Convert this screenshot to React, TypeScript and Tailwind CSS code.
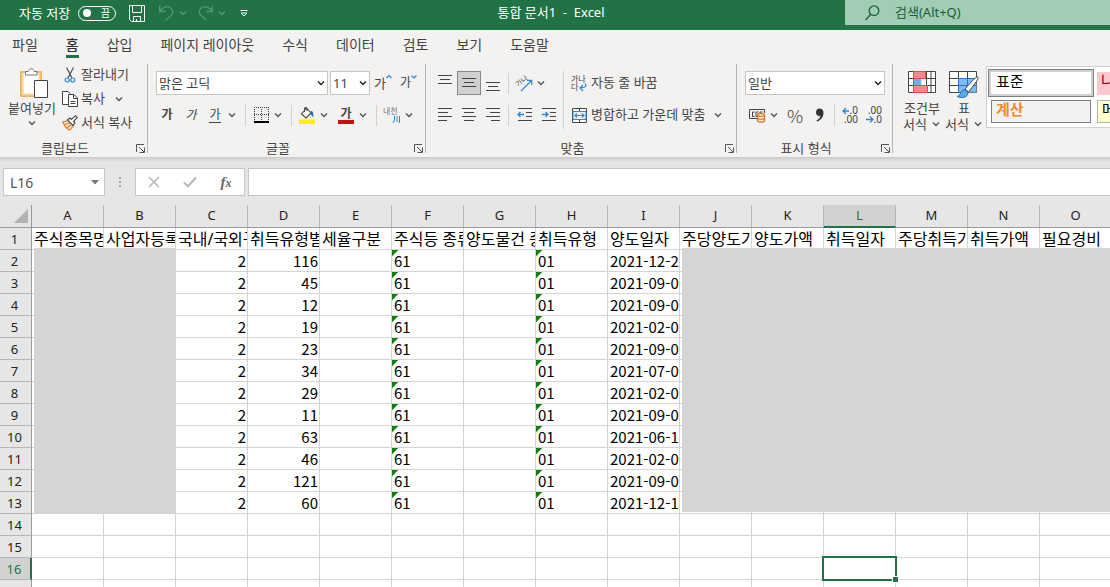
import type { ReactNode } from 'react';

const tabs = ['파일', '홈', '삽입', '페이지 레이아웃', '수식', '데이터', '검토', '보기', '도움말'];

const columns = ['A', 'B', 'C', 'D', 'E', 'F', 'G', 'H', 'I', 'J', 'K', 'L', 'M', 'N', 'O'];

const headings = [
  '주식종목명',
  '사업자등록',
  '국내/국외구',
  '취득유형별',
  '세율구분',
  '주식등 종류',
  '양도물건 종',
  '취득유형',
  '양도일자',
  '주당양도가',
  '양도가액',
  '취득일자',
  '주당취득가',
  '취득가액',
  '필요경비',
];

const records = [
  { quantity: 116, date: '2021-12-20' },
  { quantity: 45, date: '2021-09-06' },
  { quantity: 12, date: '2021-09-06' },
  { quantity: 19, date: '2021-02-02' },
  { quantity: 23, date: '2021-09-06' },
  { quantity: 34, date: '2021-07-08' },
  { quantity: 29, date: '2021-02-02' },
  { quantity: 11, date: '2021-09-06' },
  { quantity: 63, date: '2021-06-14' },
  { quantity: 46, date: '2021-02-02' },
  { quantity: 121, date: '2021-09-06' },
  { quantity: 60, date: '2021-12-17' },
];

const emptyRows = [14, 15, 16, 17];

function Chevron({ className = 'text-[#555]' }: { className?: string }) {
  return (
    <svg width="10" height="10" viewBox="0 0 10 10" fill="none" className={`shrink-0 ${className}`} aria-hidden="true">
      <path d="M2 3.5 L5 6.5 L8 3.5" stroke="currentColor" strokeWidth="1.4" />
    </svg>
  );
}

function Separator({ className = 'ml-2 mr-[3px]' }: { className?: string }) {
  return <div className={`h-[21px] w-px shrink-0 bg-[#d2d0ce] ${className}`} />;
}

function IconButton({ label, active = false, children }: { label: string; active?: boolean; children: ReactNode }) {
  return (
    <button
      type="button"
      aria-label={label}
      className={`flex h-6 w-6 shrink-0 items-center justify-center ${active ? 'border border-[#8a8886] bg-[#d2d0ce]' : ''}`}
    >
      {children}
    </button>
  );
}

function MenuButton({ label }: { label: string }) {
  return (
    <button type="button" aria-label={label} className="flex h-6 w-[10px] shrink-0 items-center">
      <Chevron />
    </button>
  );
}

function Dropdown({ label, value, className }: { label: string; value: string; className: string }) {
  return (
    <div className={`relative h-6 shrink-0 ${className}`}>
      <select
        aria-label={label}
        className="h-6 w-full appearance-none border border-[#c8c6c4] bg-white pl-[2px] text-[13px] leading-5 text-[#444]"
      >
        <option>{value}</option>
      </select>
      <span className="pointer-events-none absolute right-[2px] top-[7px]">
        <Chevron className="text-[#222]" />
      </span>
    </div>
  );
}

function Group({ title, className, launcher = true, children }: { title: string; className: string; launcher?: boolean; children: ReactNode }) {
  return (
    <section aria-label={title} className={`flex h-[97px] shrink-0 ${className}`}>
      <div className="flex min-w-0 flex-1 flex-col">
        <div className="flex-1">{children}</div>
        {launcher && (
          <div className="flex h-[19px] items-center">
            <span className="flex-1 text-center leading-[18px]">{title}</span>
            <button type="button" aria-label={`${title} 설정`} className="flex w-[17px] justify-center pt-[2px] pl-1">
              <svg width="9" height="9" viewBox="0 0 9 9" fill="none" stroke="#555" aria-hidden="true">
                <path d="M0.5 8 V0.5 H8 M3 3 L8 8 M8.5 3.5 V8.5 H3.5" />
              </svg>
            </button>
          </div>
        )}
      </div>
      {launcher && <div className="mt-1 h-[89px] w-px bg-[#b8b6b4]" />}
    </section>
  );
}

function Lines({ rows }: { rows: [number, number, number][] }) {
  return (
    <svg width="14" height="16" viewBox="0 0 14 16" shapeRendering="crispEdges" fill="#444" aria-hidden="true">
      {rows.map(([x, y, width]) => (
        <rect key={y} x={x} y={y} width={width} height="1" />
      ))}
    </svg>
  );
}

function IndentIcon({ arrow }: { arrow: string }) {
  return (
    <svg width="15" height="16" viewBox="0 0 15 16" fill="none" aria-hidden="true">
      <g fill="#444" shapeRendering="crispEdges">
        <rect x="1" y="1" width="14" height="1" />
        <rect x="9" y="5" width="6" height="1" />
        <rect x="9" y="9" width="6" height="1" />
        <rect x="1" y="13" width="14" height="1" />
      </g>
      <path d={arrow} stroke="#2b88d8" strokeWidth="1.3" />
    </svg>
  );
}

function DecimalIcon({ top, bottom, arrow }: { top: string; bottom: string; arrow: string }) {
  return (
    <svg width="17" height="18" viewBox="0 0 17 18" fill="none" className="overflow-visible" aria-hidden="true">
      <text x="16" y="8" fontSize="10" textAnchor="end" fill="#444">{top}</text>
      <text x="16" y="17" fontSize="10" textAnchor="end" fill="#444">{bottom}</text>
      <path d={arrow} stroke="#2b88d8" strokeWidth="1.3" />
    </svg>
  );
}

function TitleBar() {
  return (
    <header className="grid h-[30px] shrink-0 grid-cols-[1fr_auto_1fr] bg-[#217346] text-[13px] text-white">
      <div className="flex h-[26px] items-center pl-[19px]">
        <label htmlFor="autosave" className="w-[59px] leading-6">자동 저장</label>
        <button
          id="autosave"
          type="button"
          role="switch"
          aria-checked="false"
          className="flex h-[15px] w-[38px] items-center justify-between rounded-full border border-white pl-1 pr-[5px] text-[10px] leading-3"
        >
          <span className="h-2 w-2 rounded-full bg-white" />끔
        </button>
        <button type="button" aria-label="저장" className="ml-[13px]">
          <svg width="16" height="17" viewBox="0 0 16 17" fill="none" stroke="white" aria-hidden="true">
            <path d="M0.5 0.5 H15.5 V16.5 H2.5 L0.5 14.5 Z M3.5 0.5 V7.5 H12.5 V0.5 M4.5 16.5 V11.5 H11.5 V16.5 M7.5 14 V16.5" />
          </svg>
        </button>
        <button type="button" aria-label="실행 취소" className="ml-[14px] flex items-center gap-1 text-[#4f9a70]">
          <svg width="15" height="16" viewBox="0 0 15 16" fill="none" stroke="currentColor" strokeWidth="1.3" aria-hidden="true">
            <path d="M0.7 0.5 V6.5 H6.5 M1 6.2 C4 1.5 9 0.5 12 3.2 C14.5 5.5 14 8.5 12 10.5 L6.5 15.5" />
          </svg>
          <Chevron className="text-[#4f9a70]" />
        </button>
        <button type="button" aria-label="다시 실행" className="ml-[10px] flex items-center gap-1 text-[#4f9a70]">
          <svg width="15" height="16" viewBox="0 0 15 16" fill="none" stroke="currentColor" strokeWidth="1.3" aria-hidden="true">
            <path d="M14.3 0.5 V6.5 H8.5 M14 6.2 C11 1.5 6 0.5 3 3.2 C0.5 5.5 1 8.5 3 10.5 L8.5 15.5" />
          </svg>
          <Chevron className="text-[#4f9a70]" />
        </button>
        <button type="button" aria-label="빠른 실행 도구 모음" className="ml-[13px]">
          <svg width="8" height="8" viewBox="0 0 8 8" fill="none" stroke="white" aria-hidden="true">
            <path d="M0.5 1.5 H7.5 M1 4 L4 7 L7 4 Z" />
          </svg>
        </button>
      </div>
      <h1 className="whitespace-pre pr-2 leading-6">통합 문서1  -  Excel</h1>
      <label className="ml-auto flex h-[25px] w-[265px] items-center bg-[#a0cdb4] pl-5">
        <svg width="15" height="16" viewBox="0 0 15 16" fill="none" stroke="#1c5f39" strokeWidth="1.3" aria-hidden="true">
          <circle cx="9" cy="5.7" r="4.8" />
          <path d="M5.7 9.3 L0.6 15" />
        </svg>
        <input
          type="search"
          aria-label="검색"
          placeholder="검색(Alt+Q)"
          className="ml-[15px] min-w-0 flex-1 bg-transparent outline-none placeholder:text-[#1c5f39]"
        />
      </label>
    </header>
  );
}

function ClipboardGroup() {
  return (
    <Group title="클립보드" className="w-[148px]">
      <div className="flex pl-1">
        <button type="button" className="flex w-[56px] flex-col items-center pt-2">
          <svg width="28" height="30" viewBox="0 0 28 30" fill="none" className="ml-1" aria-hidden="true">
            <path d="M1 4 H21 V28 H1 Z" fill="#fff" stroke="#e8a33d" strokeWidth="1.6" />
            <path d="M2.8 5 V26.3 H13 M19.3 5 V12" stroke="#fbdba5" strokeWidth="2" />
            <path d="M5.5 7 V3.5 H8.5 C9 -0.3 13.5 -0.3 14 3.5 H17 V7 Z" fill="#fff" stroke="#777" />
            <path d="M14.5 12.5 H27.5 V29.5 H14.5 Z" fill="#fff" stroke="#444" />
          </svg>
          <span className="leading-5">붙여넣기</span>
          <Chevron />
        </button>
        <div className="ml-[2px] flex flex-col pt-[3px]">
          <button type="button" className="flex h-6 items-center gap-[3px]">
            <svg width="16" height="16" viewBox="0 0 16 16" fill="none" aria-hidden="true">
              <path d="M4.5 0.5 L10 11 M11.5 0.5 L6 11" stroke="#555" strokeWidth="1.3" />
              <circle cx="5.2" cy="13" r="2" stroke="#2b88d8" strokeWidth="1.2" />
              <circle cx="10.8" cy="13" r="2" stroke="#2b88d8" strokeWidth="1.2" />
            </svg>
            잘라내기
          </button>
          <button type="button" className="flex h-6 items-center gap-[3px]">
            <svg width="16" height="16" viewBox="0 0 16 16" fill="#fff" stroke="#444" aria-hidden="true">
              <path d="M0.5 0.5 H6 L9 3.5 V13.5 H0.5 Z" />
              <path d="M6.5 3.5 H12 L15.5 7 V15.5 H6.5 Z M11.5 3.5 V7.5 H15.5 M8.5 10.5 H13.5 M8.5 12.5 H13.5" />
            </svg>
            복사
            <span className="ml-[6px]">
              <Chevron />
            </span>
          </button>
          <button type="button" className="flex h-6 items-center gap-[3px]">
            <svg width="16" height="16" viewBox="0 0 16 16" fill="none" aria-hidden="true">
              <path d="M0.8 7 L6.5 5.5 L11.5 10.5 L8 15 C5.5 14.5 2.5 11 0.8 7 Z" fill="#fce5c5" stroke="#d8741b" strokeWidth="1.1" />
              <path d="M3 9.5 L8 8 M5 12.5 L9.5 10" stroke="#d8741b" strokeWidth="1.1" />
              <path d="M5.5 5 L8 3 L9.5 4.5 L13.5 0.7 L15.3 2.5 L11.5 6.5 L13 8 L11 10.5 Z" fill="#fff" stroke="#444" strokeWidth="1.1" />
            </svg>
            서식 복사
          </button>
        </div>
      </div>
    </Group>
  );
}

function FontGroup() {
  return (
    <Group title="글꼴" className="w-[278px]">
      <div className="flex flex-col gap-2 pl-[7px] pt-[11px]">
        <div className="flex items-center">
          <Dropdown label="글꼴 이름" value="맑은 고딕" className="ml-px w-[172px]" />
          <Dropdown label="글꼴 크기" value="11" className="ml-[2px] w-10" />
          <button type="button" aria-label="글꼴 크게" className="ml-1 flex h-6 items-start text-[13px] leading-6">
            가
            <svg width="6" height="12" viewBox="0 0 6 12" fill="none" stroke="#2b88d8" strokeWidth="1.2" aria-hidden="true">
              <path d="M0.5 7 L3 4.5 L5.5 7" />
            </svg>
          </button>
          <button type="button" aria-label="글꼴 작게" className="ml-2 flex h-6 items-start text-[12px] leading-6">
            가
            <svg width="6" height="12" viewBox="0 0 6 12" fill="none" stroke="#2b88d8" strokeWidth="1.2" aria-hidden="true">
              <path d="M0.5 4.5 L3 7 L5.5 4.5" />
            </svg>
          </button>
        </div>
        <div className="flex items-center">
          <IconButton label="굵게"><span className="text-[12px] font-bold">가</span></IconButton>
          <IconButton label="기울임꼴"><span className="text-[12px] italic">가</span></IconButton>
          <IconButton label="밑줄"><span className="border-b border-[#444] text-[12px] leading-[15px]">가</span></IconButton>
          <MenuButton label="밑줄 옵션" />
          <Separator />
          <IconButton label="테두리">
            <svg width="15" height="16" viewBox="0 0 15 16" fill="none" stroke="#444" aria-hidden="true">
              <path d="M0 0.5 H15 M0 7.5 H15 M0.5 2 V14 M7.5 2 V14 M14.5 2 V14" strokeDasharray="1 1" />
              <path d="M0 15 H15" stroke="#000" strokeWidth="2" />
            </svg>
          </IconButton>
          <MenuButton label="테두리 옵션" />
          <Separator />
          <IconButton label="채우기 색">
            <svg width="16" height="17" viewBox="0 0 16 17" fill="none" aria-hidden="true">
              <path d="M7.5 1 L12 6 L7 11 L2.5 7 Z M5.5 5 V2 C5.5 0 8 0 8 2 V4" fill="#fff" stroke="#444" strokeWidth="1.1" />
              <path d="M12 4 C14 4 14.5 6 14.3 10.5 L11.5 7 Z" fill="#2b6cb0" />
              <rect y="12.5" width="16" height="4.5" fill="#fff100" />
            </svg>
          </IconButton>
          <MenuButton label="채우기 색 옵션" />
          <div className="w-[5px]" />
          <IconButton label="글꼴 색">
            <span className="w-4 border-b-4 border-[#c50f0f] text-center text-[12px] font-bold leading-[13px]">가</span>
          </IconButton>
          <MenuButton label="글꼴 색 옵션" />
          <Separator />
          <IconButton label="윗주 필드">
            <svg width="18" height="18" viewBox="0 0 18 18" fill="none" className="overflow-visible" aria-hidden="true">
              <text x="0" y="8" fontSize="8" fill="#777">내천</text>
              <path d="M11.5 10 V14 L10 17 M14 10 V16 M16.5 10 V17" stroke="#2b88d8" />
            </svg>
          </IconButton>
          <MenuButton label="윗주 옵션" />
        </div>
      </div>
    </Group>
  );
}

function AlignmentGroup() {
  return (
    <Group title="맞춤" className="w-[311px]">
      <div className="flex pl-[7px] pt-[11px]">
        <div className="flex flex-col gap-2">
          <div className="flex items-center">
            <IconButton label="위쪽 맞춤"><Lines rows={[[0, 0, 14], [2, 4, 10], [0, 8, 14]]} /></IconButton>
            <IconButton label="가운데 맞춤" active><Lines rows={[[0, 3, 14], [2, 7, 10], [0, 11, 14]]} /></IconButton>
            <IconButton label="아래쪽 맞춤"><Lines rows={[[0, 7, 14], [2, 11, 10], [0, 15, 14]]} /></IconButton>
            <Separator className="mx-[3px]" />
            <IconButton label="방향">
              <svg width="17" height="17" viewBox="0 0 17 17" fill="none" className="overflow-visible" aria-hidden="true">
                <text x="0" y="10" fontSize="7" fill="#444" transform="rotate(-38 4 8)">가나</text>
                <path d="M5 16 L15.5 5.5 M11 5.3 H15.7 V10" stroke="#2b88d8" strokeWidth="1.2" />
              </svg>
            </IconButton>
            <MenuButton label="방향 옵션" />
          </div>
          <div className="flex items-center">
            <IconButton label="왼쪽 맞춤"><Lines rows={[[0, 1, 14], [0, 5, 10], [0, 9, 14], [0, 13, 9]]} /></IconButton>
            <IconButton label="가로 가운데 맞춤"><Lines rows={[[0, 1, 14], [2, 5, 10], [0, 9, 14], [2, 13, 10]]} /></IconButton>
            <IconButton label="오른쪽 맞춤"><Lines rows={[[0, 1, 14], [4, 5, 10], [0, 9, 14], [5, 13, 9]]} /></IconButton>
            <Separator className="mx-[3px]" />
            <IconButton label="내어쓰기"><IndentIcon arrow="M7 7.5 H1 M3.5 5 L1 7.5 L3.5 10" /></IconButton>
            <IconButton label="들여쓰기"><IndentIcon arrow="M1 7.5 H7 M4.5 5 L7 7.5 L4.5 10" /></IconButton>
          </div>
        </div>
        <div className="mx-[3px] h-[58px] w-px bg-[#d2d0ce]" />
        <div className="flex flex-col gap-2">
          <button type="button" className="flex h-6 items-center">
            <span className="flex w-6 justify-center">
              <svg width="16" height="17" viewBox="0 0 16 17" fill="none" className="overflow-visible" aria-hidden="true">
                <text x="0" y="7" fontSize="8" fill="#444">가나</text>
                <text x="0" y="15" fontSize="8" fill="#444">다</text>
                <path d="M14 8.5 C16 11 14.5 13 9 13 M12 10 L9 13 L12 16" stroke="#2b88d8" strokeWidth="1.2" />
              </svg>
            </span>
            자동 줄 바꿈
          </button>
          <button type="button" className="flex h-6 items-center">
            <span className="flex w-6 justify-center">
              <svg width="15" height="15" viewBox="0 0 15 15" fill="none" aria-hidden="true">
                <path d="M0.5 0.5 H14.5 V14.5 H0.5 Z M0.5 3.5 H14.5 M0.5 11.5 H14.5 M7.5 0.5 V3.5 M7.5 11.5 V14.5" fill="#fff" stroke="#444" />
                <path d="M1 3.5 H14 V11.5 H1 Z" fill="#e5f1fb" stroke="#2b88d8" />
                <path d="M3 7.5 H12 M5 5.5 L3 7.5 L5 9.5 M10 5.5 L12 7.5 L10 9.5" stroke="#2b88d8" strokeWidth="1.2" />
              </svg>
            </span>
            병합하고 가운데 맞춤
            <span className="ml-2">
              <Chevron />
            </span>
          </button>
        </div>
      </div>
    </Group>
  );
}

function NumberGroup() {
  return (
    <Group title="표시 형식" className="w-[156px]">
      <div className="flex flex-col gap-2 pl-2 pt-[11px]">
        <Dropdown label="표시 형식" value="일반" className="w-[140px]" />
        <div className="flex items-center">
          <IconButton label="회계 표시 형식">
            <svg width="17" height="15" viewBox="0 0 17 15" fill="none" aria-hidden="true">
              <path d="M15.5 5 V1.5 H0.5 V10.5 H8" stroke="#444" />
              <path d="M5.5 4 H3.5 V8.5 H5.5 M9 8.5 H7 V4 H9.5 M11 6 V4 H13.5" stroke="#444" />
              <path d="M8.5 7 C8.5 5 15.5 5 15.5 7 V12.5 C15.5 14.5 8.5 14.5 8.5 12.5 Z" fill="#fff" stroke="#d8741b" strokeWidth="1.3" />
              <path d="M8.5 7 C8.5 8.8 15.5 8.8 15.5 7 M8.5 10 C8.5 11.6 15.5 11.6 15.5 10" stroke="#d8741b" strokeWidth="1.3" />
            </svg>
          </IconButton>
          <MenuButton label="회계 옵션" />
          <div className="w-1" />
          <IconButton label="백분율"><span className="font-['Noto_Sans_CJK_KR',sans-serif] text-[18px] font-light leading-6">%</span></IconButton>
          <IconButton label="쉼표 스타일">
            <svg width="9" height="14" viewBox="0 0 9 14" fill="#333" aria-hidden="true">
              <path d="M4.5 0.5 C7 0.5 8.5 2.2 8.5 4.8 C8.5 9 6 12.5 2 13.5 L1.5 12.3 C4 11.3 5.2 9.8 5.4 7.8 C2.8 8.3 1 6.8 1 4.4 C1 2 2.5 0.5 4.5 0.5 Z" />
            </svg>
          </IconButton>
          <Separator className="mx-[3px]" />
          <IconButton label="자릿수 늘림"><DecimalIcon top=".0" bottom=".00" arrow="M7 5 H1 M4 2 L1 5 L4 8" /></IconButton>
          <IconButton label="자릿수 줄임"><DecimalIcon top=".00" bottom=".0" arrow="M0 13.5 H7 M4 10.5 L7 13.5 L4 16.5" /></IconButton>
        </div>
      </div>
    </Group>
  );
}

function StylesGroup() {
  return (
    <Group title="스타일" className="min-w-0 flex-1" launcher={false}>
      <div className="flex pl-2 leading-4">
        <button type="button" className="flex w-[42px] shrink-0 flex-col items-center pt-[11px]">
          <span className="h-[29px]">
            <svg width="28" height="23" viewBox="0 0 28 23" fill="none" aria-hidden="true">
              <path d="M0.5 0.5 H27.5 V21.5 H0.5 Z" fill="#fff" stroke="#444" />
              <path d="M0.5 7.5 H27.5 M0.5 14.5 H27.5 M5.5 0.5 V21.5 M18.5 0.5 V21.5 M23 0.5 V21.5" stroke="#444" />
              <path d="M5.5 0.5 H17.5 V7.5 H5.5 Z M5.5 14.5 H19.5 V21.5 H5.5 Z" fill="#f8888d" stroke="#e8474c" />
              <path d="M5.5 8 H13.5 V14 H5.5 Z" fill="#6cb1ea" />
              <path d="M13.5 8 H18 V14 H13.5 Z" fill="#fff" />
            </svg>
          </span>
          조건부
          <span className="flex items-center gap-1 whitespace-nowrap">서식 <Chevron /></span>
        </button>
        <button type="button" className="flex w-[42px] shrink-0 flex-col items-center pt-[11px]">
          <span className="h-[29px]">
            <svg width="30" height="28" viewBox="0 0 30 28" fill="none" aria-hidden="true">
              <path d="M0.5 0.5 H27.5 V21.5 H0.5 Z" fill="#fff" stroke="#444" />
              <path d="M9.5 7.5 H27.5 V21.5 H9.5 Z" fill="#7dbcf0" />
              <path d="M0.5 7.5 H27.5 M0.5 14.5 H9.5 M9.5 0.5 V21.5 M18.5 0.5 V7.5" stroke="#444" />
              <path d="M9.5 7.5 H27.5 M9.5 7.5 V21.5 M9.5 14.5 H27.5 M18.5 7.5 V21.5" stroke="#1f78c8" />
              <path d="M28.5 6 C30 7 29.5 8.5 19.5 21 L16 18 C25 8 27 5.5 28.5 6 Z" fill="#fff" stroke="#444" />
              <path d="M15.5 18.5 L19 21.5 C19 26.5 13 27.5 8 25.5 C12 24.5 11 19.5 15.5 18.5 Z" fill="#5aa8e8" stroke="#1f6fb5" />
            </svg>
          </span>
          표
          <span className="flex items-center gap-1 whitespace-nowrap">서식 <Chevron /></span>
        </button>
        <div className="ml-px mt-[6px] flex h-[62px] shrink-0 gap-[3px] border border-[#d2d0ce] bg-white pl-px pt-[2px] text-[15px]">
          <div className="flex w-[106px] flex-col items-center gap-[3px]">
            <button type="button" className="h-7 w-full border border-[#7f7f7f] pb-1 pl-[7px] text-left text-black shadow-[inset_0_0_0_2px_#cfcfcf]">
              표준
            </button>
            <button type="button" className="h-[23px] w-[100px] border border-[#7f7f7f] bg-[#f2f2f2] pb-2 pl-1 text-left font-bold text-[#ee8a28]">
              계산
            </button>
          </div>
          <div className="flex w-[100px] flex-col gap-[5px] pt-[3px]">
            <button type="button" className="h-[23px] bg-[#ffc7ce] pb-2 pl-1 text-left text-[#9c0006]">나쁨</button>
            <button type="button" className="h-[23px] border border-[#b2b2b2] bg-[#ffffcc] pb-2 pl-1 text-left text-black">메모</button>
          </div>
        </div>
      </div>
    </Group>
  );
}

function Ribbon() {
  return (
    <div className="shrink-0 overflow-hidden bg-[#f3f2f1] text-[13px] text-[#444]">
      <nav className="flex h-[30px] gap-7 pl-3 text-[14px] leading-[30px]">
        {tabs.map((tab) => (
          <a
            key={tab}
            href="#"
            className={`h-7 whitespace-nowrap ${tab === '홈' ? 'border-b-[3px] border-[#217346] font-medium text-[#333]' : ''}`}
          >
            {tab}
          </a>
        ))}
      </nav>
      <div className="flex">
        <ClipboardGroup />
        <FontGroup />
        <AlignmentGroup />
        <NumberGroup />
        <StylesGroup />
      </div>
    </div>
  );
}

function FormulaBar() {
  return (
    <div className="flex h-12 shrink-0 bg-linear-to-b from-[#cbcac9] to-[#e6e6e6] to-[5px] pl-[3px] pt-[11px]">
      <div className="flex h-7 w-[102px] items-center border border-[#c6c6c6] bg-white">
        <input aria-label="이름 상자" defaultValue="L16" className="w-20 bg-transparent pl-[6px] text-[14px] text-[#555] outline-none" />
        <button type="button" aria-label="이름 목록" className="ml-[7px]">
          <svg width="8" height="5" viewBox="0 0 8 5" fill="#777" aria-hidden="true">
            <path d="M0 0 H8 L4 4.5 Z" />
          </svg>
        </button>
      </div>
      <div className="flex h-7 w-[30px] flex-col items-center justify-center gap-[2px]">
        <span className="h-[2px] w-[2px] bg-[#a6a6a6]" />
        <span className="h-[2px] w-[2px] bg-[#a6a6a6]" />
        <span className="h-[2px] w-[2px] bg-[#a6a6a6]" />
      </div>
      <div className="flex h-7 w-[110px] border border-[#c6c6c6] bg-white">
        <button type="button" aria-label="취소" className="flex w-9 items-center justify-center">
          <svg width="12" height="12" viewBox="0 0 12 12" fill="none" stroke="#b9b9b9" strokeWidth="1.6" aria-hidden="true">
            <path d="M1 1 L11 11 M11 1 L1 11" />
          </svg>
        </button>
        <button type="button" aria-label="입력" className="flex w-9 items-center justify-center">
          <svg width="14" height="12" viewBox="0 0 14 12" fill="none" stroke="#b9b9b9" strokeWidth="2.2" aria-hidden="true">
            <path d="M1 6.5 L5 10.3 L13 1.5" />
          </svg>
        </button>
        <button
          type="button"
          aria-label="함수 삽입"
          className="w-9 text-center font-['Liberation_Serif',serif] text-[15px] font-bold italic leading-6 text-[#666]"
        >
          f<span className="text-[12px]">x</span>
        </button>
      </div>
      <input aria-label="수식 입력줄" className="ml-[3px] h-7 min-w-0 flex-1 border border-r-0 border-[#c6c6c6] bg-white px-2 text-[14px] outline-none" />
    </div>
  );
}

function RowHeader({ row, selected = false }: { row: number; selected?: boolean }) {
  return (
    <th
      scope="row"
      className={`h-[22px] border-b border-[#b5b5b5] p-0 pt-px pr-[2px] text-[13px] leading-5 font-normal ${
        selected ? 'border-r-2 border-r-[#217346] bg-[#d2d2d2] text-[#217346]' : 'border-r border-r-[#9b9b9b] bg-[#e6e6e6] text-[#222]'
      }`}
    >
      {row < 17 ? row : ''}
    </th>
  );
}

function Cell({ children, align = 'text-left', flagged = false }: { children?: ReactNode; align?: string; flagged?: boolean }) {
  return (
    <td
      className={`h-[22px] overflow-hidden whitespace-nowrap border-b border-r border-[#d4d4d4] p-0 pl-[2px] pr-px font-['Noto_Sans_CJK_KR',sans-serif] text-[15px] leading-5 ${align} ${
        flagged ? 'bg-[linear-gradient(135deg,#107c10_4px,transparent_5px)]' : ''
      }`}
    >
      {children}
    </td>
  );
}

function Sheet() {
  return (
    <main className="relative min-h-0 flex-1 overflow-hidden bg-white">
      <table className="w-[calc(100%+2px)] table-fixed border-separate border-spacing-0 text-black">
        <colgroup>
          <col className="w-8" />
          {columns.map((column) => (
            <col key={column} className={column === 'O' ? '' : 'w-[72px]'} />
          ))}
        </colgroup>
        <thead>
          <tr>
            <th className="h-[23px] border-b border-r border-[#9b9b9b] bg-[#e6e6e6] p-0">
              <svg width="14" height="14" viewBox="0 0 14 14" fill="#b2b2b2" className="ml-[14px]" aria-hidden="true">
                <path d="M14 0 V14 H0 Z" />
              </svg>
            </th>
            {columns.map((column) => (
              <th
                key={column}
                scope="col"
                className={`h-[23px] border-r border-r-[#b5b5b5] p-0 pb-[2px] text-[13px] font-normal leading-[18px] ${
                  column === 'L' ? 'border-b-2 border-b-[#217346] bg-[#d2d2d2] text-[#217346]' : 'border-b border-b-[#9b9b9b] bg-[#e6e6e6] text-[#222]'
                }`}
              >
                {column}
              </th>
            ))}
          </tr>
        </thead>
        <tbody>
          <tr>
            <RowHeader row={1} />
            {headings.map((heading) => (
              <td key={heading} className="h-[22px] overflow-hidden whitespace-nowrap border-b border-r border-[#d4d4d4] p-0 pl-[2px] text-[16px] leading-5">
                {heading}
              </td>
            ))}
          </tr>
          {records.map((record, index) => (
            <tr key={index}>
              <RowHeader row={index + 2} />
              <Cell />
              <Cell />
              <Cell align="text-right">2</Cell>
              <Cell align="text-right">{record.quantity}</Cell>
              <Cell />
              <Cell flagged>61</Cell>
              <Cell />
              <Cell flagged>01</Cell>
              <Cell>{record.date}</Cell>
              <Cell />
              <Cell />
              <Cell />
              <Cell />
              <Cell />
              <Cell />
            </tr>
          ))}
          {emptyRows.map((row) => (
            <tr key={row}>
              <RowHeader row={row} selected={row === 16} />
              {columns.map((column) =>
                row === 16 && column === 'L' ? (
                  <td key={column} className="relative h-[22px] border-b border-r border-[#d4d4d4] p-0">
                    <div className="absolute -inset-[2px] z-10 border-2 border-[#217346]" />
                    <div className="absolute -bottom-[4px] -right-[4px] z-10 h-[7px] w-[7px] border border-white bg-[#217346]" />
                  </td>
                ) : (
                  <Cell key={column} />
                )
              )}
            </tr>
          ))}
        </tbody>
      </table>
      {/* Private columns are covered */}
      <div className="absolute left-[34px] top-[43px] h-[266px] w-[142px] bg-[#d5d5d5]" />
      <div className="absolute left-[682px] right-0 top-[43px] h-[264px] bg-[#d5d5d5]" />
    </main>
  );
}

function App() {
  return (
    <div lang="ko" className="flex h-screen flex-col overflow-hidden bg-white font-['Noto_Sans','Noto_Sans_CJK_KR',sans-serif]">
      <TitleBar />
      <Ribbon />
      <FormulaBar />
      <Sheet />
    </div>
  );
}

export default App;
